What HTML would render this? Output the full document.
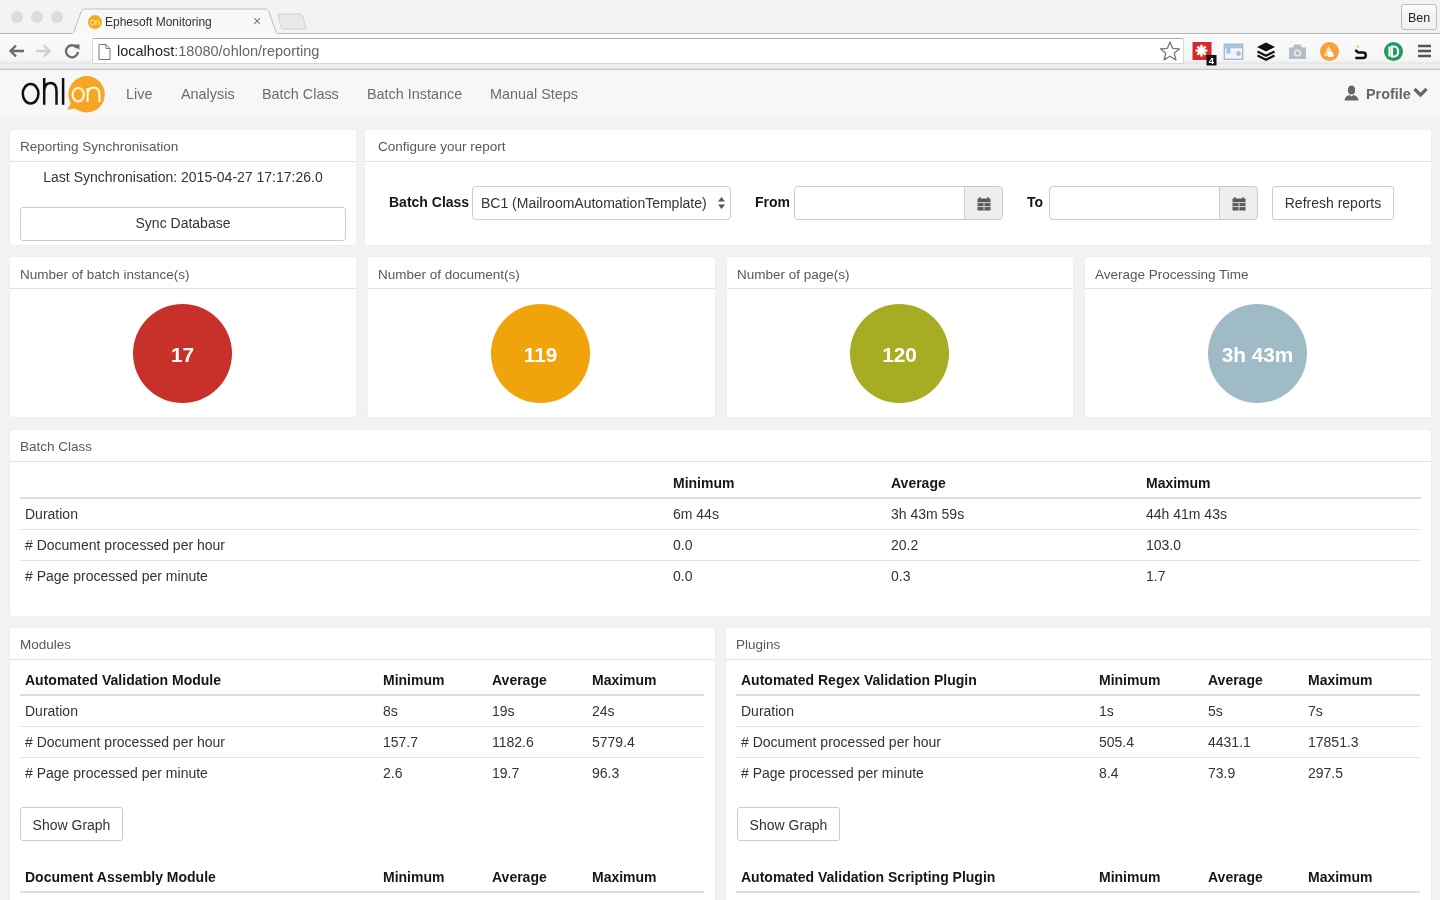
<!DOCTYPE html>
<html><head><meta charset="utf-8">
<style>
*{box-sizing:border-box}
html,body{margin:0;padding:0}
body{width:1440px;height:900px;overflow:hidden;position:relative;will-change:transform;background:#f2f1f4;font-family:"Liberation Sans",sans-serif;font-size:14px;color:#333}
.abs{position:absolute}
/* browser chrome */
#tabbar{position:absolute;left:0;top:0;width:1440px;height:34px;background:#f3f4f2;border-bottom:1px solid #b9b9b9}
#toolbar{position:absolute;left:0;top:34px;width:1440px;height:36px;background:linear-gradient(#fbfbfb,#f5f5f5 75%,#e6e6e6 84%,#f2f2f2 90%,#e0e0e0);border-bottom:1px solid #c6c6c6}
.light{position:absolute;top:11px;width:12px;height:12px;border-radius:50%;background:#dcdcdc}
#tab{position:absolute;left:74px;top:9px;width:204px;height:26px;background:#f5f5f5}
#tabshape{position:absolute;left:68px;top:8px}
#tabtitle{position:absolute;left:105px;top:15px;font-size:12px;color:#333;white-space:nowrap}
#url{position:absolute;left:92px;top:38px;width:1092px;height:26px;background:#fff;border:1px solid #d6d6d6;border-top-color:#a9a9a9;border-radius:2px}
#urltext{position:absolute;left:117px;top:43px;font-size:14.5px;color:#666;white-space:nowrap}
#ben{position:absolute;left:1401px;top:4px;width:36px;height:26px;border:1px solid #bdbdbd;border-radius:3px;background:linear-gradient(#fff,#f3f4f2 30%);font-size:12.5px;color:#222;text-align:center;line-height:27px}
/* navbar */
#navbar{position:absolute;left:0;top:70px;width:1440px;height:49px;background:#f7f7f7}
#navfade{position:absolute;left:0;top:113px;width:1440px;height:8px;background:linear-gradient(#f7f7f7,#f2f1f4)}
.nav{position:absolute;top:86px;font-size:14.4px;color:#6c6c6c;white-space:nowrap}
/* panels */
.panel{position:absolute;background:#fff;border-radius:2px;box-shadow:0 0 1px rgba(0,0,0,.13)}
.ph{height:32px;border-bottom:1px solid #e2e2e2;padding:9px 10px 0 10px;font-size:13.5px;line-height:16px;color:#595959;white-space:nowrap}
.circle{position:absolute;width:99px;height:99px;border-radius:50%;color:#fff;font-weight:bold;font-size:20.8px;text-align:center;line-height:102px}
table{border-collapse:collapse;position:absolute}
td,th{padding:0 5px;height:31px;text-align:left;white-space:nowrap;font-size:14px;color:#333}
th{font-weight:bold;color:#161616;border-bottom:2px solid #ddd;padding-top:2px}
td{border-top:1px solid #e3e3e3}
tr.first td{border-top:0}
.btn{position:absolute;border:1px solid #ccc;border-radius:3px;background:#fff;color:#333;font-size:14px;text-align:center}
.lbl{font-weight:bold;color:#161616;font-size:14px;white-space:nowrap}
.sel{border:1px solid #d0d0d0;border-radius:4px;background:#fff;font-size:14px;color:#333;white-space:nowrap}
.inp{border:1px solid #ccc;border-radius:4px 0 0 4px;background:#fff}
.addon{border:1px solid #ccc;border-radius:0 4px 4px 0;background:#eee}
</style></head><body>
<div id="tabbar">
  <div class="light" style="left:11px"></div>
  <div class="light" style="left:31px"></div>
  <div class="light" style="left:51px"></div>
  <svg id="tabshape" width="220" height="27" viewBox="0 0 220 27"><path d="M0 26.5 C6 26.5 6 24 8 18 L13 4 C14 1.5 15 1 18 1 L196 1 C199 1 200 1.5 201 4 L206 18 C208 24 208 26.5 214 26.5" fill="#f8f8f8" stroke="#bdbdbd" stroke-width="1"/></svg>
  <svg class="abs" style="left:277px;top:13px" width="30" height="18" viewBox="0 0 30 18"><path d="M1 1 L22 1 C24 1 25 2 26 4 L29 16 L6 16 C5 16 4 15 4 14 Z" fill="#e9e9e9" stroke="#d0d0d0"/></svg>
  <svg class="abs" style="left:87px;top:14px" width="16" height="16" viewBox="0 0 16 16"><circle cx="8" cy="8" r="7" fill="#f2ad1e"/><path d="M3 14 L4.5 10.5 L7 13Z" fill="#f2ad1e"/><ellipse cx="5.6" cy="8.5" rx="2" ry="2.4" fill="none" stroke="#fde7b5" stroke-width="1"/><path d="M8.8 11V6.5M8.8 8.5C8.8 6.8 12.4 6.3 12.4 8.5V11" fill="none" stroke="#fde7b5" stroke-width="1"/></svg>
  <div id="tabtitle">Ephesoft Monitoring</div>
  <div class="abs" style="left:253px;top:13px;font-size:14px;color:#777">&#215;</div>
  <div id="ben">Ben</div>
</div>
<div id="toolbar"></div>
<div id="url"></div>
<svg class="abs" style="left:8px;top:44px" width="17" height="14" viewBox="0 0 17 14"><path d="M16 7H3M8 1.5L2.5 7L8 12.5" fill="none" stroke="#6a6a6a" stroke-width="2.4"/></svg>
<svg class="abs" style="left:35px;top:44px" width="17" height="14" viewBox="0 0 17 14"><path d="M1 7H14M9 1.5L14.5 7L9 12.5" fill="none" stroke="#cfcfcf" stroke-width="2.4"/></svg>
<svg class="abs" style="left:64px;top:43px" width="17" height="16" viewBox="0 0 17 16"><path d="M13.2 5.2A6 6 0 1 0 14 9" fill="none" stroke="#6a6a6a" stroke-width="2.3"/><path d="M10 1.5L15.5 1.5L15.5 7Z" fill="#6a6a6a"/></svg>
<svg class="abs" style="left:98px;top:44px" width="13" height="16" viewBox="0 0 13 16"><path d="M1 .5H8L12 4.5V15.5H1Z M8 .5V4.5H12" fill="#fff" stroke="#777" stroke-width="1"/></svg>
<svg class="abs" style="left:1158px;top:40px" width="24" height="22" viewBox="0 0 24 22"><path d="M12 2 L14.6 8.3 L21.5 8.8 L16.2 13.2 L17.9 19.9 L12 16.3 L6.1 19.9 L7.8 13.2 L2.5 8.8 L9.4 8.3 Z" fill="#fff" stroke="#777" stroke-width="1.3" stroke-linejoin="round"/></svg>
<svg class="abs" style="left:1190px;top:40px" width="30" height="28" viewBox="0 0 30 28"><rect x="2.5" y="2" width="19" height="18" fill="#d42a2a"/><path d="M11.5 4.8v11.6M5.7 10.6h11.6M7.4 6.5l8.2 8.2M7.4 14.7l8.2-8.2" stroke="#fff" stroke-width="2.4"/><rect x="16.5" y="15" width="10" height="10.5" fill="#111"/><text x="21.5" y="24" font-family="Liberation Sans" font-weight="bold" font-size="9.5" fill="#fff" text-anchor="middle">4</text></svg>
<svg class="abs" style="left:1223px;top:43px" width="21" height="18" viewBox="0 0 21 18"><rect x="1.3" y="1.3" width="18.4" height="15" fill="#eef6fc" stroke="#a8b8cc" stroke-width="1.4"/><rect x="2" y="2" width="17" height="3.2" fill="#a3c6e4"/><rect x="3.5" y="5" width="4" height="5.5" fill="#a3c3de"/><circle cx="15.5" cy="10.5" r="2.4" fill="#b5bec8"/></svg>
<svg class="abs" style="left:1256px;top:42px" width="20" height="19" viewBox="0 0 20 19"><path d="M10 .5 L19 5 L10 9.5 L1 5 Z" fill="#111"/><path d="M1.5 9.5 L10 13.8 L18.5 9.5" fill="none" stroke="#111" stroke-width="2.2"/><path d="M1.5 13.5 L10 17.8 L18.5 13.5" fill="none" stroke="#111" stroke-width="2.2"/></svg>
<svg class="abs" style="left:1288px;top:43px" width="19" height="17" viewBox="0 0 19 17"><path d="M1 4.5 H5 L6.5 1.5 H12.5 L14 4.5 H18 V16 H1 Z" fill="#b4bcc4"/><circle cx="9.5" cy="10" r="3.6" fill="#eef1f4"/><circle cx="9.5" cy="10" r="2.2" fill="#b4bcc4"/></svg>
<svg class="abs" style="left:1319px;top:41px" width="21" height="21" viewBox="0 0 21 21"><circle cx="10.5" cy="10.5" r="9.5" fill="#f7a13a"/><path d="M5 15 L9.5 5 L15.5 15 Z" fill="#fde2c0"/><path d="M9 11 h5v5h-5z" fill="#fff"/></svg>
<svg class="abs" style="left:1353px;top:44px" width="16" height="17" viewBox="0 0 16 17"><circle cx="4.8" cy="2.4" r="1.5" fill="#cde36a"/><path d="M2.3 6 L5.2 8.4 H10.2 C13.6 8.4 13.6 14 10.2 14 H2.3" fill="none" stroke="#111" stroke-width="2.5"/></svg>
<svg class="abs" style="left:1383px;top:41px" width="21" height="21" viewBox="0 0 21 21"><circle cx="10.5" cy="10.5" r="9.5" fill="#1e9b5d"/><path d="M6.5 5.5V15.5M9 5.5H11C16.5 5.5 16.5 15.5 11 15.5H9Z" fill="none" stroke="#fff" stroke-width="2.2"/></svg>
<svg class="abs" style="left:1417px;top:43px" width="15" height="15" viewBox="0 0 15 15"><path d="M1 3H14M1 8H14M1 13H14" stroke="#555" stroke-width="2.5"/></svg>
<div id="urltext"><span style="color:#222">localhost</span>:18080/ohlon/reporting</div>

<div id="navbar"></div>
<div id="navfade"></div>
<svg class="abs" style="left:0;top:70px" width="120" height="50" viewBox="0 0 120 50">
<ellipse cx="30.6" cy="23.75" rx="7.8" ry="9.7" fill="none" stroke="#111" stroke-width="2.5"/>
<path d="M44.2 8V34.7M44.2 22C44.2 15.5 47 12.9 50.4 12.9C54 12.9 56.5 15.5 56.5 21V34.7M63.1 8V34.7" fill="none" stroke="#111" stroke-width="2.5"/>
<circle cx="86.6" cy="24.3" r="18.2" fill="#f6a623"/>
<path d="M72 31 L67.3 39.8 L78 38 Z" fill="#f6a623"/>
<ellipse cx="78.2" cy="24.7" rx="5.6" ry="6.7" fill="none" stroke="#fff4dd" stroke-width="2.2"/>
<path d="M87.6 32V18M87.6 24.5C87.6 20 90 17.6 93.5 17.6C97 17.6 99.4 20 99.4 24.5V32" fill="none" stroke="#fff4dd" stroke-width="2.2"/>
</svg>
<svg class="abs" style="left:1343px;top:85px" width="17" height="16" viewBox="0 0 17 16"><ellipse cx="8.5" cy="5" rx="3.6" ry="4.5" fill="#666"/><path d="M1.5 15.5 C2 11.5 4.5 10.5 6.5 10 L8.5 11.5 L10.5 10 C12.5 10.5 15 11.5 15.5 15.5 Z" fill="#666"/></svg>
<svg class="abs" style="left:1413px;top:87px" width="15" height="11" viewBox="0 0 15 11"><path d="M1.5 2 L7.5 8 L13.5 2" fill="none" stroke="#666" stroke-width="3.2"/></svg>

<div class="nav" style="left:126px">Live</div>
<div class="nav" style="left:181px">Analysis</div>
<div class="nav" style="left:262px">Batch Class</div>
<div class="nav" style="left:367px">Batch Instance</div>
<div class="nav" style="left:490px">Manual Steps</div>
<div class="nav" style="left:1366px;font-weight:bold;color:#666">Profile</div>

<!-- row 1 -->
<div class="panel" style="left:10px;top:130px;width:346px;height:115px">
  <div class="ph">Reporting Synchronisation</div>
  <div class="abs" style="left:0;top:39px;width:346px;text-align:center">Last Synchronisation: 2015-04-27 17:17:26.0</div>
  <div class="btn" style="left:10px;top:77px;width:326px;height:34px;line-height:31px">Sync Database</div>
</div>
<div class="panel" style="left:365px;top:130px;width:1066px;height:115px">
  <div class="ph" style="padding-left:13px">Configure your report</div>
  <div class="abs lbl" style="left:24px;top:64px">Batch Class</div>
  <div class="abs sel" style="left:107px;top:56px;width:259px;height:34px"><span style="position:absolute;left:8px;top:8px">BC1 (MailroomAutomationTemplate)</span>
    <svg class="abs" style="left:245px;top:10px" width="7" height="12" viewBox="0 0 7 12"><path d="M3.5 0 L7 4.6 L0 4.6 Z M0 7.4 L7 7.4 L3.5 12 Z" fill="#555"/></svg></div>
  <div class="abs lbl" style="left:390px;top:64px">From</div>
  <div class="abs inp" style="left:429px;top:56px;width:171px;height:34px"></div>
  <div class="abs addon" style="left:599px;top:56px;width:39px;height:34px"><svg class="abs" style="left:12px;top:10px" width="14" height="14" viewBox="0 0 14 14"><path d="M.5 1.5h13v12H.5z" fill="#5a5a5a"/><path d="M.5 5.6h13M.5 9.6h13M7 5.6v8" stroke="#e6e6e6" stroke-width=".9"/><path d="M3 0v2M11 0v2" stroke="#5a5a5a" stroke-width="1.4"/></svg></div>
  <div class="abs lbl" style="left:662px;top:64px">To</div>
  <div class="abs inp" style="left:684px;top:56px;width:171px;height:34px"></div>
  <div class="abs addon" style="left:854px;top:56px;width:39px;height:34px"><svg class="abs" style="left:12px;top:10px" width="14" height="14" viewBox="0 0 14 14"><path d="M.5 1.5h13v12H.5z" fill="#5a5a5a"/><path d="M.5 5.6h13M.5 9.6h13M7 5.6v8" stroke="#e6e6e6" stroke-width=".9"/><path d="M3 0v2M11 0v2" stroke="#5a5a5a" stroke-width="1.4"/></svg></div>
  <div class="btn" style="left:907px;top:56px;width:122px;height:34px;line-height:33px">Refresh reports</div>
</div>

<!-- row 2 -->
<div class="panel" style="left:10px;top:257px;width:346px;height:160px"><div class="ph" style="padding-top:10px">Number of batch instance(s)</div>
  <div class="circle" style="left:123px;top:47px;background:#c8312a">17</div></div>
<div class="panel" style="left:368px;top:257px;width:347px;height:160px"><div class="ph" style="padding-top:10px">Number of document(s)</div>
  <div class="circle" style="left:123px;top:47px;background:#f0a30b">119</div></div>
<div class="panel" style="left:727px;top:257px;width:346px;height:160px"><div class="ph" style="padding-top:10px">Number of page(s)</div>
  <div class="circle" style="left:123px;top:47px;background:#a6ad22">120</div></div>
<div class="panel" style="left:1085px;top:257px;width:346px;height:160px"><div class="ph" style="padding-top:10px">Average Processing Time</div>
  <div class="circle" style="left:123px;top:47px;background:#9fbcc6">3h 43m</div></div>

<!-- row 3 -->
<div class="panel" style="left:10px;top:430px;width:1421px;height:186px"><div class="ph">Batch Class</div><table style="left:10px;top:37px;width:1401px"><colgroup><col style="width:648px"><col style="width:218px"><col style="width:255px"><col style="width:280px"></colgroup><tr><th></th><th>Minimum</th><th>Average</th><th>Maximum</th></tr><tr class="first"><td>Duration</td><td>6m 44s</td><td>3h 43m 59s</td><td>44h 41m 43s</td></tr><tr><td># Document processed per hour</td><td>0.0</td><td>20.2</td><td>103.0</td></tr><tr><td># Page processed per minute</td><td>0.0</td><td>0.3</td><td>1.7</td></tr></table></div>

<!-- row 4 -->
<div class="panel" style="left:10px;top:628px;width:705px;height:300px"><div class="ph">Modules</div><table style="left:10px;top:36px;width:684px"><colgroup><col style="width:358px"><col style="width:109px"><col style="width:100px"><col style="width:117px"></colgroup><tr><th>Automated Validation Module</th><th>Minimum</th><th>Average</th><th>Maximum</th></tr><tr class="first"><td>Duration</td><td>8s</td><td>19s</td><td>24s</td></tr><tr><td># Document processed per hour</td><td>157.7</td><td>1182.6</td><td>5779.4</td></tr><tr><td># Page processed per minute</td><td>2.6</td><td>19.7</td><td>96.3</td></tr></table><div class="btn" style="left:10px;top:179px;width:103px;height:34px;line-height:34px">Show Graph</div><table style="left:10px;top:233px;width:684px"><colgroup><col style="width:358px"><col style="width:109px"><col style="width:100px"><col style="width:117px"></colgroup><tr><th>Document Assembly Module</th><th>Minimum</th><th>Average</th><th>Maximum</th></tr></table></div>
<div class="panel" style="left:726px;top:628px;width:705px;height:300px"><div class="ph">Plugins</div><table style="left:10px;top:36px;width:684px"><colgroup><col style="width:358px"><col style="width:109px"><col style="width:100px"><col style="width:117px"></colgroup><tr><th>Automated Regex Validation Plugin</th><th>Minimum</th><th>Average</th><th>Maximum</th></tr><tr class="first"><td>Duration</td><td>1s</td><td>5s</td><td>7s</td></tr><tr><td># Document processed per hour</td><td>505.4</td><td>4431.1</td><td>17851.3</td></tr><tr><td># Page processed per minute</td><td>8.4</td><td>73.9</td><td>297.5</td></tr></table><div class="btn" style="left:11px;top:179px;width:103px;height:34px;line-height:34px">Show Graph</div><table style="left:10px;top:233px;width:684px"><colgroup><col style="width:358px"><col style="width:109px"><col style="width:100px"><col style="width:117px"></colgroup><tr><th>Automated Validation Scripting Plugin</th><th>Minimum</th><th>Average</th><th>Maximum</th></tr></table></div>
</body></html>
